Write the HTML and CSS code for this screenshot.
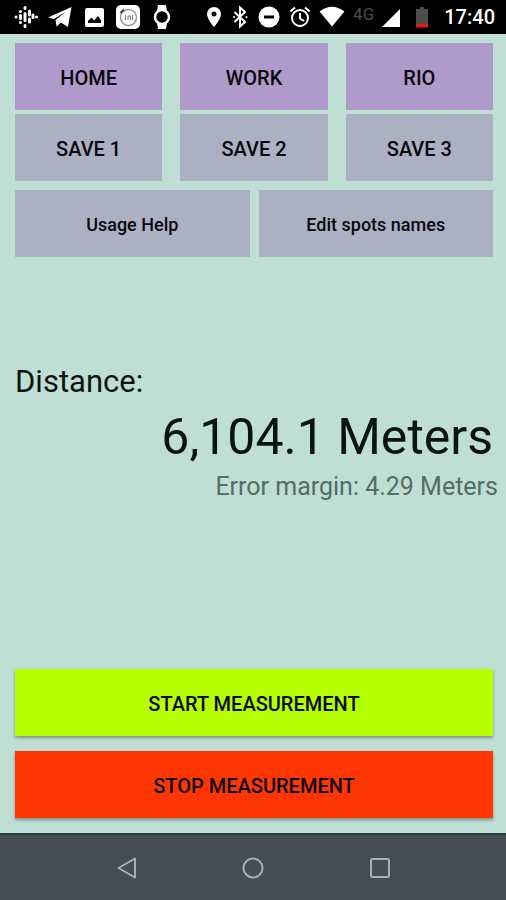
FILE: index.html
```html
<!DOCTYPE html>
<html lang="en">
<head>
    <meta charset="utf-8">
    <meta name="viewport" content="width=device-width, initial-scale=1">
    <title>Distance Meter</title>
    <link rel="stylesheet" href="styles.css">
</head>
<body>
    <header class="status-bar">
        <div class="status-left">
            <svg width="24" height="24" viewBox="0 0 24 24" stroke="#fff" stroke-width="3" stroke-linecap="round">
                <path d="M2 12h0M6.500 10.500v3M11 2.500v1M11 8.500v7M11 20.500v1M15.500 6v4M15.500 14v3M6.500 6.500v0M6.500 17.500v0M19 10v2.500M22.500 12h0"/>
            </svg>
            <svg width="24" height="24" viewBox="0 0 24 24" fill="#fff">
                <path d="M0 12.500 23.500 2 20 22 13 17.500 8.500 21.500 7.500 15 18 6.500 6 14z"/>
            </svg>
            <svg width="24" height="24" viewBox="0 0 24 24">
                <rect x="3" y="3" width="19" height="19" rx="2" fill="#fff"/>
                <path d="M6 18v-2l3.500-3.500 2.500 3 4-4.500 3 4.500V18z" fill="#000"/>
            </svg>
            <svg width="24" height="24" viewBox="0 0 24 24" fill="none">
                <rect width="24" height="24" rx="5" fill="#fff"/>
                <circle cx="12.500" cy="12.500" r="8" stroke="#999" stroke-width="1.500"/>
                <path d="M4.500 8 8 4.500" stroke="#444" stroke-width="2"/>
                <path d="M9.500 10v5M12 15v-4h2.500v4M16.500 10v5" stroke="#777"/>
            </svg>
            <svg width="24" height="24" viewBox="0 0 24 24">
                <path d="M8 0h8l1 6H7zM7 18h10l-1 6H8z" fill="#fff"/>
                <circle cx="12" cy="12" r="7" fill="#000" stroke="#fff" stroke-width="2.500"/>
            </svg>
        </div>
        <div class="status-right">
            <svg width="18" height="24" viewBox="0 0 18 24">
                <path d="M9 2a7 7 0 0 0-7 7c0 5 7 13 7 13s7-8 7-13a7 7 0 0 0-7-7z" fill="#fff"/>
                <circle cx="9" cy="9" r="2.500" fill="#000"/>
            </svg>
            <svg width="18" height="24" viewBox="0 0 18 24" fill="none" stroke="#fff" stroke-width="2">
                <path d="M3.500 7 14 17l-5 4.500v-19L14 7 3.500 17"/>
                <path d="M3 12h0M15.500 12h0" stroke-linecap="round"/>
            </svg>
            <svg width="24" height="24" viewBox="0 0 24 24">
                <circle cx="12" cy="12" r="10.500" fill="#fff"/>
                <path d="M7 12h10" stroke="#000" stroke-width="3"/>
            </svg>
            <svg width="22" height="24" viewBox="0 0 22 24" fill="none" stroke="#fff" stroke-width="2">
                <circle cx="11" cy="13" r="8"/>
                <path d="M11 8v5.500l4 2.500M1.500 6.500 6 2.500M20.500 6.500 16 2.500"/>
            </svg>
            <svg width="26" height="24" viewBox="0 0 26 24" fill="#fff">
                <path d="M.500 6.500Q13-3 25.500 6.500L13 21.500z"/>
            </svg>
            <span class="network">4G</span>
            <svg width="18" height="24" viewBox="0 0 18 24" fill="#fff">
                <path d="M18 4v18H0z"/>
            </svg>
            <svg width="28" height="24" viewBox="0 0 28 24">
                <path d="M8 4h4V2h4v2h4v15H8z" fill="#4c4c4c"/>
                <path d="M8 19h12v3.500H8z" fill="#e3191c"/>
            </svg>
            <time class="clock">17:40</time>
        </div>
    </header>

    <main class="content">
        <div class="spots">
            <button type="button" class="btn spot">HOME</button>
            <button type="button" class="btn spot">WORK</button>
            <button type="button" class="btn spot">RIO</button>
            <button type="button" class="btn">SAVE 1</button>
            <button type="button" class="btn">SAVE 2</button>
            <button type="button" class="btn">SAVE 3</button>
        </div>
        <div class="tools">
            <button type="button" class="btn tool">Usage Help</button>
            <button type="button" class="btn tool">Edit spots names</button>
        </div>

        <section class="readout">
            <h1 class="label">Distance:</h1>
            <p class="distance">6,104.1 Meters</p>
            <p class="margin-error">Error margin: 4.29 Meters</p>
        </section>

        <div class="actions">
            <button type="button" class="btn start">START MEASUREMENT</button>
            <button type="button" class="btn stop">STOP MEASUREMENT</button>
        </div>
    </main>

    <nav class="nav-bar">
        <button type="button" class="nav-btn" aria-label="Back">
            <svg width="24" height="24" viewBox="0 0 24 24"><path d="M20 2.500v19L3.500 12z"/></svg>
        </button>
        <button type="button" class="nav-btn" aria-label="Home">
            <svg width="24" height="24" viewBox="0 0 24 24"><circle cx="12" cy="12" r="9.500"/></svg>
        </button>
        <button type="button" class="nav-btn" aria-label="Recent apps">
            <svg width="24" height="24" viewBox="0 0 24 24"><rect x="3" y="3" width="18" height="18" rx="1"/></svg>
        </button>
    </nav>
</body>
</html>
```

FILE: styles.css
```css
:root {
    --bg-color: #bfdfd4;
    --text-color: #0b1412;
    --btn-text-color: #08080c;
    --btn-bg-color: #abb1c3;
    --spot-bg-color: #b09acb;
    --start-color: #b5ff00;
    --stop-color: #ff3503;
    --nav-color: #464d53;
}

* {
    box-sizing: border-box;
}

body {
    display: flex;
    flex-direction: column;
    min-height: 100vh;
    margin: 0;
    font-family: Roboto, "Liberation Sans", sans-serif;
    background-color: var(--bg-color);
    color: var(--text-color);
}

/* Status bar */
.status-bar {
    display: flex;
    justify-content: space-between;
    align-items: center;
    height: 34px;
    padding: 0 11px 0 14px;
    background-color: #000;
    color: #fff;
}

.status-left,
.status-right {
    display: flex;
    align-items: center;
    gap: 8px;
}

.status-left {
    gap: 10px;
}

.network {
    align-self: flex-start;
    font-size: 17px;
    line-height: 18px;
    color: #4c4c4c;
}

.clock {
    font-size: 20px;
    font-weight: 500;
    line-height: 24px;
}

/* Main screen */
.content {
    flex: 1;
    display: flex;
    flex-direction: column;
    padding: 9px 13px 15px 15px;
}

.btn {
    height: 67px;
    padding: 2px 0 0;
    border: none;
    background-color: var(--btn-bg-color);
    color: var(--btn-text-color);
    font-family: inherit;
    font-size: 20px;
    font-weight: 500;
    cursor: pointer;
}

.spots {
    display: grid;
    grid-template-columns: repeat(3, 1fr);
    gap: 4px 18px;
}

.spot {
    background-color: var(--spot-bg-color);
}

.tools {
    display: grid;
    grid-template-columns: 1fr 1fr;
    gap: 9px;
    margin-top: 9px;
}

.tool {
    font-size: 18px;
}

.readout {
    display: flex;
    flex-direction: column;
    flex: 1;
    justify-content: center;
    padding-bottom: 63px;
}

.label,
.distance,
.margin-error {
    margin: 0;
    font-weight: 400;
}

.label {
    font-size: 31px;
    line-height: 40px;
}

.distance {
    font-size: 50px;
    line-height: 70px;
    text-align: right;
}

.margin-error {
    margin-right: -5px;
    font-size: 25px;
    line-height: 30px;
    text-align: right;
    color: #566c65;
}

.actions {
    display: flex;
    flex-direction: column;
    gap: 15px;
}

.start,
.stop {
    box-shadow: 0 2px 3px rgba(0, 0, 0, 0.35);
}

.start {
    background-color: var(--start-color);
}

.stop {
    background-color: var(--stop-color);
}

/* Navigation bar */
.nav-bar {
    display: flex;
    justify-content: center;
    align-items: center;
    height: 67px;
    border-top: 2px solid #2c403d;
    background-color: var(--nav-color);
}

.nav-btn {
    width: 25%;
    padding: 0;
    border: none;
    background: none;
    line-height: 0;
    cursor: pointer;
}

.nav-btn svg {
    fill: none;
    stroke: #a9aeb1;
    stroke-width: 2;
    stroke-linejoin: round;
}
```
